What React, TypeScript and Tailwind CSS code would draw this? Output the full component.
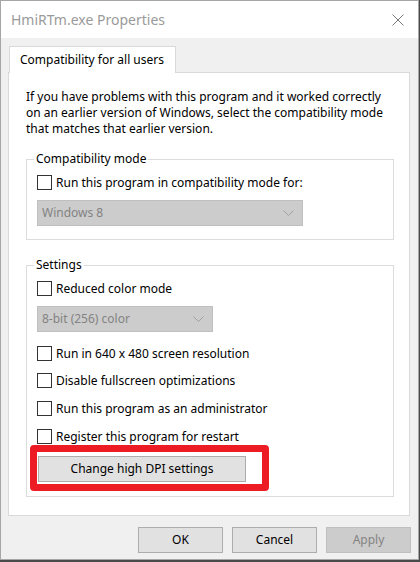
import React from "react";

const font = { fontFamily: '"Noto Sans", "Open Sans", Arial, sans-serif' };

const Checkbox: React.FC<{ label: string; className?: string }> = ({ label, className }) => (
  <label className={`flex items-center gap-[4px] h-[15px] ${className ?? ""}`}>
    <span className="w-[15px] h-[15px] border border-[#333333] bg-white shrink-0" />
    <span className="text-[12px] leading-[15px] text-black">{label}</span>
  </label>
);

const Dropdown: React.FC<{ value: string; width: string; className?: string }> = ({ value, width, className }) => (
  <div
    className={`${width} h-[26px] bg-[#cccccc] border border-[#bfbfbf] flex items-center justify-between pl-[4px] pr-[8px] ${className ?? ""}`}
  >
    <span className="text-[12px] text-[#838383]">{value}</span>
    <svg width="11" height="6" viewBox="0 0 11 6" fill="none">
      <path d="M0.5 0.5 L5.5 5.5 L10.5 0.5" stroke="#a0a0a0" strokeWidth="1" />
    </svg>
  </div>
);

const Button: React.FC<{ label: string; disabled?: boolean; className?: string }> = ({ label, disabled, className }) => (
  <div
    className={`h-[26px] flex items-center justify-center text-[12px] border ${
      disabled ? "bg-[#cccccc] border-[#bfbfbf] text-[#838383]" : "bg-[#e1e1e1] border-[#adadad] text-black"
    } ${className ?? ""}`}
  >
    {label}
  </div>
);

const App: React.FC = () => {
  return (
    <div className="w-[420px] h-[562px] bg-[#4a4a4a] overflow-hidden" style={font}>
      <div className="w-[419px] h-[560px] border border-[#a6a6a6] bg-[#f0f0f0] flex flex-col">
        {/* Title bar */}
        <div className="h-[37px] bg-white flex items-center justify-between pl-[10px] pr-[14px] shrink-0">
          <span className="text-[14px] text-[#9a9a9a] leading-none">HmiRTm.exe Properties</span>
          <svg width="12" height="12" viewBox="0 0 12 12">
            <path d="M0.5 0.5 L11.5 11.5 M11.5 0.5 L0.5 11.5" stroke="#777777" strokeWidth="1" />
          </svg>
        </div>

        {/* Body */}
        <div className="flex flex-col pt-[8px] px-[7px]">
          {/* Tab header */}
          <div className="flex">
            <div className="ml-[1px] w-[167px] h-[27px] bg-white border border-b-0 border-[#d9d9d9] flex items-center pl-[10px] text-[12px] text-black -mb-[1px] relative z-10">
              Compatibility for all users
            </div>
          </div>

          {/* Tab panel */}
          <div className="w-[402px] h-[444px] bg-white border border-[#d9d9d9] flex flex-col pl-[17px] pr-[14px] pt-[16px]">
            <p className="text-[12px] leading-[16px] text-black">
              If you have problems with this program and it worked correctly
              <br />
              on an earlier version of Windows, select the compatibility mode
              <br />
              that matches that earlier version.
            </p>

            <fieldset className="mt-[14px] w-[368px] border border-[#dcdcdc] pl-[10px] pt-[8px] pb-[13px]">
              <legend className="-ml-[3px] px-[2px] text-[12px] leading-[16px] text-black">Compatibility mode</legend>
              <Checkbox label="Run this program in compatibility mode for:" />
              <Dropdown value="Windows 8" width="w-[266px]" className="mt-[10px]" />
            </fieldset>

            <fieldset className="mt-[17px] w-[368px] border border-[#dcdcdc] pl-[10px] pt-[8px] pb-[14px]">
              <legend className="-ml-[3px] px-[2px] text-[12px] leading-[16px] text-black">Settings</legend>
              <Checkbox label="Reduced color mode" />
              <Dropdown value="8-bit (256) color" width="w-[176px]" className="mt-[10px]" />
              <Checkbox label="Run in 640 x 480 screen resolution" className="mt-[14px]" />
              <Checkbox label="Disable fullscreen optimizations" className="mt-[12px]" />
              <Checkbox label="Run this program as an administrator" className="mt-[13px]" />
              <Checkbox label="Register this program for restart" className="mt-[13px]" />
              <div className="relative mt-[12px] ml-[1px] w-[208px]">
                <Button label="Change high DPI settings" className="w-[208px]" />
                <div className="absolute -left-[8px] -top-[11px] w-[239px] h-[46px] border-[7px] border-[#ed1c24] rounded-[4px] pointer-events-none" />
              </div>
            </fieldset>
          </div>

          {/* Bottom buttons */}
          <div className="flex justify-end gap-[9px] mt-[11px]">
            <Button label="OK" className="w-[85px]" />
            <Button label="Cancel" className="w-[85px]" />
            <Button label="Apply" disabled className="w-[85px]" />
          </div>
        </div>
      </div>
    </div>
  );
};

export default App;
